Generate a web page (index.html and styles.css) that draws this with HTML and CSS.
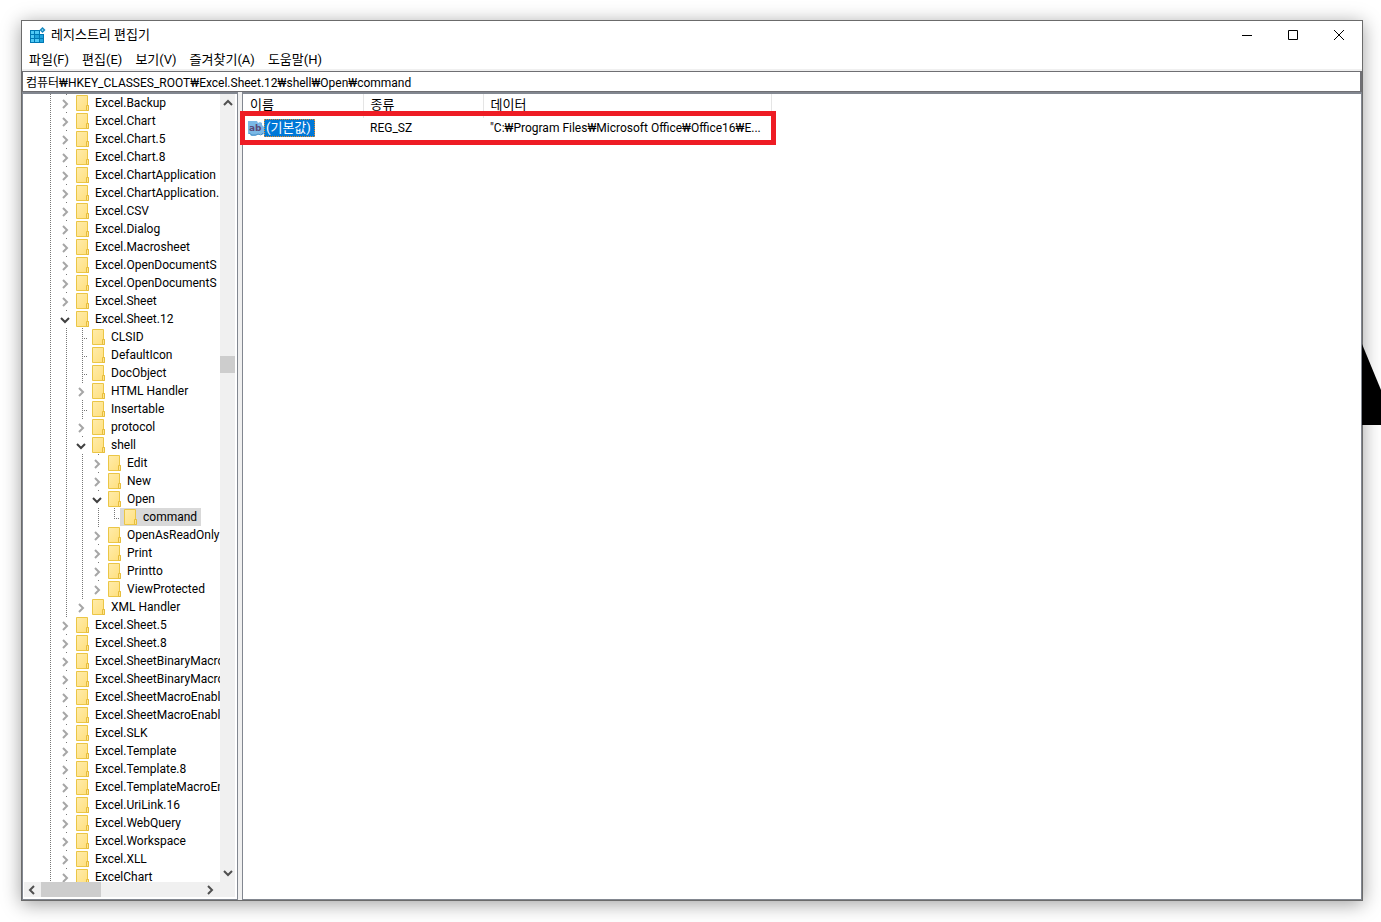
FILE: index.html
```
<!DOCTYPE html>
<html lang="ko">
<head>
<meta charset="utf-8">
<title>레지스트리 편집기</title>
<link rel="stylesheet" href="styles.css">
</head>
<body>
<svg class="defs" aria-hidden="true">
  <linearGradient id="paper" x1="0" y1="0" x2="1" y2="1"><stop offset="0" stop-color="#ffecab"/><stop offset="1" stop-color="#ffdf7c"/></linearGradient>
  <symbol id="folder" viewBox="0 0 14 16"><path d="M.5.5h11v10h1v5H.5z" fill="url(#paper)" stroke="#ebc646"/><path d="M10.500 15.500v-5h2v5z" fill="#ffe591" stroke="#e6bd3c"/></symbol>
  <symbol id="closed" viewBox="0 0 16 18"><path d="M7 6l4 4-4 4" fill="none" stroke="#a6a6a6" stroke-width="2"/></symbol>
  <symbol id="opened" viewBox="0 0 16 18"><path d="M5 8l4 4 4-4" fill="none" stroke="#404040" stroke-width="2"/></symbol>
</svg>
<svg class="backdrop" viewBox="0 0 19 81" aria-hidden="true"><path d="M0 0L19 46V81H0z"/></svg>
<main class="window">
  <header class="titlebar">
    <svg class="app-icon" viewBox="0 0 16 16" aria-hidden="true">
      <path d="M0 3h10v4h4v9H0z" fill="#0078b4"/>
      <path d="M1 4h3v3H1zM5 4h4v3H5zM1 8h3v3H1zM1 12h3v3H1zM5 12h4v3H5z" fill="#4fc9f5"/>
      <path d="M5 8h4v3H5zM10 8h3v3h-3zM10 12h3v3h-3z" fill="#20a4dc"/>
      <path d="M12.500 0L15.500 3l-3 3-3-3z" fill="#1787bd"/><path d="M12.500 2l1 1-1 1-1-1z" fill="#9be2fa"/>
    </svg>
    <h1>레지스트리 편집기</h1>
    <div class="controls">
      <button aria-label="최소화"><svg viewBox="0 0 12 12"><path d="M1 6.500h10"/></svg></button>
      <button aria-label="최대화"><svg viewBox="0 0 12 12"><path d="M1.500 1.500h9v9h-9z"/></svg></button>
      <button aria-label="닫기"><svg viewBox="0 0 12 12"><path d="M1 1l10 10M11 1L1 11"/></svg></button>
    </div>
  </header>
  <nav class="menu">
    <button>파일(F)</button><button>편집(E)</button><button>보기(V)</button><button>즐겨찾기(A)</button><button>도움말(H)</button>
  </nav>
  <input class="address" aria-label="주소" value="컴퓨터₩HKEY_CLASSES_ROOT₩Excel.Sheet.12₩shell₩Open₩command">
  <div class="panes">
    <section class="tree-pane" aria-label="키">
      <div class="tree">
        <ul>
          <li><div class="row"><button class="toggle" aria-label="펼치기"><svg><use href="#closed"/></svg></button><span class="key"><svg><use href="#folder"/></svg>Excel.Backup</span></div></li>
          <li><div class="row"><button class="toggle" aria-label="펼치기"><svg><use href="#closed"/></svg></button><span class="key"><svg><use href="#folder"/></svg>Excel.Chart</span></div></li>
          <li><div class="row"><button class="toggle" aria-label="펼치기"><svg><use href="#closed"/></svg></button><span class="key"><svg><use href="#folder"/></svg>Excel.Chart.5</span></div></li>
          <li><div class="row"><button class="toggle" aria-label="펼치기"><svg><use href="#closed"/></svg></button><span class="key"><svg><use href="#folder"/></svg>Excel.Chart.8</span></div></li>
          <li><div class="row"><button class="toggle" aria-label="펼치기"><svg><use href="#closed"/></svg></button><span class="key"><svg><use href="#folder"/></svg>Excel.ChartApplication</span></div></li>
          <li><div class="row"><button class="toggle" aria-label="펼치기"><svg><use href="#closed"/></svg></button><span class="key"><svg><use href="#folder"/></svg>Excel.ChartApplication.</span></div></li>
          <li><div class="row"><button class="toggle" aria-label="펼치기"><svg><use href="#closed"/></svg></button><span class="key"><svg><use href="#folder"/></svg>Excel.CSV</span></div></li>
          <li><div class="row"><button class="toggle" aria-label="펼치기"><svg><use href="#closed"/></svg></button><span class="key"><svg><use href="#folder"/></svg>Excel.Dialog</span></div></li>
          <li><div class="row"><button class="toggle" aria-label="펼치기"><svg><use href="#closed"/></svg></button><span class="key"><svg><use href="#folder"/></svg>Excel.Macrosheet</span></div></li>
          <li><div class="row"><button class="toggle" aria-label="펼치기"><svg><use href="#closed"/></svg></button><span class="key"><svg><use href="#folder"/></svg>Excel.OpenDocumentS</span></div></li>
          <li><div class="row"><button class="toggle" aria-label="펼치기"><svg><use href="#closed"/></svg></button><span class="key"><svg><use href="#folder"/></svg>Excel.OpenDocumentS</span></div></li>
          <li><div class="row"><button class="toggle" aria-label="펼치기"><svg><use href="#closed"/></svg></button><span class="key"><svg><use href="#folder"/></svg>Excel.Sheet</span></div></li>
          <li><div class="row"><button class="toggle" aria-label="접기"><svg><use href="#opened"/></svg></button><span class="key"><svg><use href="#folder"/></svg>Excel.Sheet.12</span></div>
            <ul>
              <li><div class="row"><i class="branch"></i><span class="key"><svg><use href="#folder"/></svg>CLSID</span></div></li>
              <li><div class="row"><i class="branch"></i><span class="key"><svg><use href="#folder"/></svg>DefaultIcon</span></div></li>
              <li><div class="row"><i class="branch"></i><span class="key"><svg><use href="#folder"/></svg>DocObject</span></div></li>
              <li><div class="row"><button class="toggle" aria-label="펼치기"><svg><use href="#closed"/></svg></button><span class="key"><svg><use href="#folder"/></svg>HTML Handler</span></div></li>
              <li><div class="row"><i class="branch"></i><span class="key"><svg><use href="#folder"/></svg>Insertable</span></div></li>
              <li><div class="row"><button class="toggle" aria-label="펼치기"><svg><use href="#closed"/></svg></button><span class="key"><svg><use href="#folder"/></svg>protocol</span></div></li>
              <li><div class="row"><button class="toggle" aria-label="접기"><svg><use href="#opened"/></svg></button><span class="key"><svg><use href="#folder"/></svg>shell</span></div>
                <ul>
                  <li><div class="row"><button class="toggle" aria-label="펼치기"><svg><use href="#closed"/></svg></button><span class="key"><svg><use href="#folder"/></svg>Edit</span></div></li>
                  <li><div class="row"><button class="toggle" aria-label="펼치기"><svg><use href="#closed"/></svg></button><span class="key"><svg><use href="#folder"/></svg>New</span></div></li>
                  <li><div class="row"><button class="toggle" aria-label="접기"><svg><use href="#opened"/></svg></button><span class="key"><svg><use href="#folder"/></svg>Open</span></div>
                    <ul>
                      <li><div class="row"><i class="branch last"></i><span class="key selected"><svg><use href="#folder"/></svg>command</span></div></li>
                    </ul>
                  </li>
                  <li><div class="row"><button class="toggle" aria-label="펼치기"><svg><use href="#closed"/></svg></button><span class="key"><svg><use href="#folder"/></svg>OpenAsReadOnly</span></div></li>
                  <li><div class="row"><button class="toggle" aria-label="펼치기"><svg><use href="#closed"/></svg></button><span class="key"><svg><use href="#folder"/></svg>Print</span></div></li>
                  <li><div class="row"><button class="toggle" aria-label="펼치기"><svg><use href="#closed"/></svg></button><span class="key"><svg><use href="#folder"/></svg>Printto</span></div></li>
                  <li><div class="row"><button class="toggle" aria-label="펼치기"><svg><use href="#closed"/></svg></button><span class="key"><svg><use href="#folder"/></svg>ViewProtected</span></div></li>
                </ul>
              </li>
              <li><div class="row"><button class="toggle" aria-label="펼치기"><svg><use href="#closed"/></svg></button><span class="key"><svg><use href="#folder"/></svg>XML Handler</span></div></li>
            </ul>
          </li>
          <li><div class="row"><button class="toggle" aria-label="펼치기"><svg><use href="#closed"/></svg></button><span class="key"><svg><use href="#folder"/></svg>Excel.Sheet.5</span></div></li>
          <li><div class="row"><button class="toggle" aria-label="펼치기"><svg><use href="#closed"/></svg></button><span class="key"><svg><use href="#folder"/></svg>Excel.Sheet.8</span></div></li>
          <li><div class="row"><button class="toggle" aria-label="펼치기"><svg><use href="#closed"/></svg></button><span class="key"><svg><use href="#folder"/></svg>Excel.SheetBinaryMacro</span></div></li>
          <li><div class="row"><button class="toggle" aria-label="펼치기"><svg><use href="#closed"/></svg></button><span class="key"><svg><use href="#folder"/></svg>Excel.SheetBinaryMacro</span></div></li>
          <li><div class="row"><button class="toggle" aria-label="펼치기"><svg><use href="#closed"/></svg></button><span class="key"><svg><use href="#folder"/></svg>Excel.SheetMacroEnabl</span></div></li>
          <li><div class="row"><button class="toggle" aria-label="펼치기"><svg><use href="#closed"/></svg></button><span class="key"><svg><use href="#folder"/></svg>Excel.SheetMacroEnabl</span></div></li>
          <li><div class="row"><button class="toggle" aria-label="펼치기"><svg><use href="#closed"/></svg></button><span class="key"><svg><use href="#folder"/></svg>Excel.SLK</span></div></li>
          <li><div class="row"><button class="toggle" aria-label="펼치기"><svg><use href="#closed"/></svg></button><span class="key"><svg><use href="#folder"/></svg>Excel.Template</span></div></li>
          <li><div class="row"><button class="toggle" aria-label="펼치기"><svg><use href="#closed"/></svg></button><span class="key"><svg><use href="#folder"/></svg>Excel.Template.8</span></div></li>
          <li><div class="row"><button class="toggle" aria-label="펼치기"><svg><use href="#closed"/></svg></button><span class="key"><svg><use href="#folder"/></svg>Excel.TemplateMacroEn</span></div></li>
          <li><div class="row"><button class="toggle" aria-label="펼치기"><svg><use href="#closed"/></svg></button><span class="key"><svg><use href="#folder"/></svg>Excel.UriLink.16</span></div></li>
          <li><div class="row"><button class="toggle" aria-label="펼치기"><svg><use href="#closed"/></svg></button><span class="key"><svg><use href="#folder"/></svg>Excel.WebQuery</span></div></li>
          <li><div class="row"><button class="toggle" aria-label="펼치기"><svg><use href="#closed"/></svg></button><span class="key"><svg><use href="#folder"/></svg>Excel.Workspace</span></div></li>
          <li><div class="row"><button class="toggle" aria-label="펼치기"><svg><use href="#closed"/></svg></button><span class="key"><svg><use href="#folder"/></svg>Excel.XLL</span></div></li>
          <li><div class="row"><button class="toggle" aria-label="펼치기"><svg><use href="#closed"/></svg></button><span class="key"><svg><use href="#folder"/></svg>ExcelChart</span></div></li>
        </ul>
      </div>
      <div class="vbar">
        <button aria-label="위로"><svg viewBox="0 0 15 17"><path d="M4 11l4-4 4 4"/></svg></button>
        <div class="track"><div class="thumb"></div></div>
        <button aria-label="아래로"><svg viewBox="0 0 15 17"><path d="M4 6l4 4 4-4"/></svg></button>
      </div>
      <div class="hbar">
        <button aria-label="왼쪽"><svg viewBox="0 0 17 15"><path d="M10 4l-4 4 4 4"/></svg></button>
        <div class="track"><div class="thumb"></div></div>
        <button aria-label="오른쪽"><svg viewBox="0 0 17 15"><path d="M6 4l4 4-4 4"/></svg></button>
      </div>
    </section>
    <section class="list-pane" aria-label="값">
      <table>
        <colgroup><col class="col-name"><col class="col-type"><col class="col-data"></colgroup>
        <thead><tr><th>이름</th><th>종류</th><th>데이터</th></tr></thead>
        <tbody><tr>
          <td class="name"><div class="value">
            <svg viewBox="0 0 16 16" aria-hidden="true"><path d="M0 1h9l1 2 2-1 2 1v2l2 2v7l-2 1-2-1-2 1H9l-2 1H3l-1-2H0z" fill="#7ab8e6"/><path d="M1 13l3 2h4l2-1 3 1 2-2" fill="none" stroke="#4a90c5"/><text x="1" y="11">ab</text></svg>
            <span>(기본값)</span></div></td>
          <td>REG_SZ</td>
          <td>"C:₩Program Files₩Microsoft Office₩Office16₩E...</td>
        </tr></tbody>
      </table>
      <div class="highlight"></div>
    </section>
  </div>
</main>
</body>
</html>
```
FILE: styles.css
```
* { box-sizing: border-box; }
body {
  display: flex;
  height: 100vh;
  margin: 0;
  padding: 20px 18px 21px 21px;
  overflow: hidden;
  background: #fff;
  color: #000;
  font: 12px/18px Roboto, "Noto Sans CJK KR", sans-serif;
}
button { padding: 0; border: 0; background: none; color: inherit; font: inherit; }
svg { display: block; fill: none; }
.defs { position: absolute; width: 0; height: 0; }
.backdrop { position: absolute; z-index: 1; top: 344px; right: 0; width: 19px; height: 81px; fill: #000; }
.window {
  display: flex;
  flex: 1;
  flex-direction: column;
  min-width: 0;
  border: 1px solid #6b6b6b;
  background: #fff;
  box-shadow: 0 3px 18px rgba(0, 0, 0, .38);
}
.titlebar { display: flex; align-items: center; height: 28px; padding-left: 8px; }
.app-icon { width: 16px; height: 16px; }
h1 { flex: 1; margin: 0 0 0 5px; font-size: 13px; font-weight: 400; }
.controls { display: flex; }
.controls button { display: grid; place-items: center; width: 46px; height: 28px; }
.controls svg { width: 12px; height: 12px; stroke: #000; }
.menu { display: flex; gap: 13px; height: 22px; padding: 1px 7px 0; border-bottom: 2px solid #f0f0f0; font-size: 13px; }
.address {
  width: 100%;
  height: 21px;
  padding: 0 3px;
  border: 1px solid #6f6f73;
  border-right-width: 2px;
  background: #fff;
  color: inherit;
  font: inherit;
}
.panes { display: flex; flex: 1; gap: 4px; min-height: 0; background: #f0f0f0; }
.tree-pane {
  display: grid;
  grid-template: minmax(0, 1fr) 15px / minmax(0, 1fr) 15px;
  width: 216px;
  padding: 0 2px 2px 1px;
  border: 1px solid #828790;
  border-top-width: 2px;
  background: #fff;
}
.tree { overflow: hidden; }
.tree ul {
  margin: 0;
  padding: 0 0 0 16px;
  list-style: none;
  background: repeating-linear-gradient(#777 0 1px, transparent 1px 2px) 10px 0 / 1px 100% no-repeat;
}
.tree > ul { padding-left: 32px; background-position: 26px 0; }
.row { display: flex; height: 18px; white-space: nowrap; }
.toggle, .branch { flex: none; width: 16px; height: 18px; }
.toggle { background: linear-gradient(#777, #777) 10px 0 / 1px 1px no-repeat; }
.toggle svg { width: 16px; height: 18px; }
.branch {
  background:
    repeating-linear-gradient(#777 0 1px, transparent 1px 2px) 10px 0 / 1px 100% no-repeat,
    repeating-linear-gradient(90deg, #777 0 1px, transparent 1px 2px) 10px 10px / 6px 1px no-repeat;
}
.branch.last { background-size: 1px 10px, 6px 1px; }
.key { display: flex; gap: 5px; padding: 0 4px; }
.key svg { flex: none; width: 14px; height: 16px; margin-top: 1px; }
.selected { background: #d9d9d9; }
.vbar, .hbar { display: flex; background: #f0f0f0; }
.vbar { flex-direction: column; }
.hbar { grid-column: 1 / -1; padding-right: 16px; }
.vbar button, .vbar button svg { width: 15px; height: 17px; }
.hbar button, .hbar button svg { width: 17px; height: 15px; }
.vbar svg, .hbar svg { stroke: #505050; stroke-width: 2; }
.track { flex: 1; }
.thumb { background: #cdcdcd; }
.vbar .thumb { height: 17px; margin-top: 245px; }
.hbar .thumb { width: 60px; height: 15px; }
.list-pane {
  position: relative;
  flex: 1;
  min-width: 0;
  border: 1px solid #828790;
  border-top-width: 2px;
  background: #fff;
}
table { width: 529px; border-collapse: collapse; table-layout: fixed; }
.col-name, .col-type { width: 120px; }
th, td { padding: 0 7px; font-weight: 400; text-align: left; }
th { height: 24px; padding-bottom: 2px; border-right: 1px solid #e5e5e5; font-size: 13px; }
td { height: 20px; overflow: hidden; white-space: nowrap; }
.name { padding: 0 5px; font-size: 13px; }
.value { display: flex; align-items: center; }
.value svg { width: 16px; height: 16px; }
.value text { fill: #5c4a78; font: bold 9px "DejaVu Sans", sans-serif; }
.value span { padding: 0 4px 0 2px; outline: 1px dotted #e08a2c; outline-offset: -1px; background: #0078d7; color: #fff; }
.highlight { position: absolute; top: 17px; left: -3px; width: 536px; height: 34px; border: 5px solid #ee1c24; }
```
